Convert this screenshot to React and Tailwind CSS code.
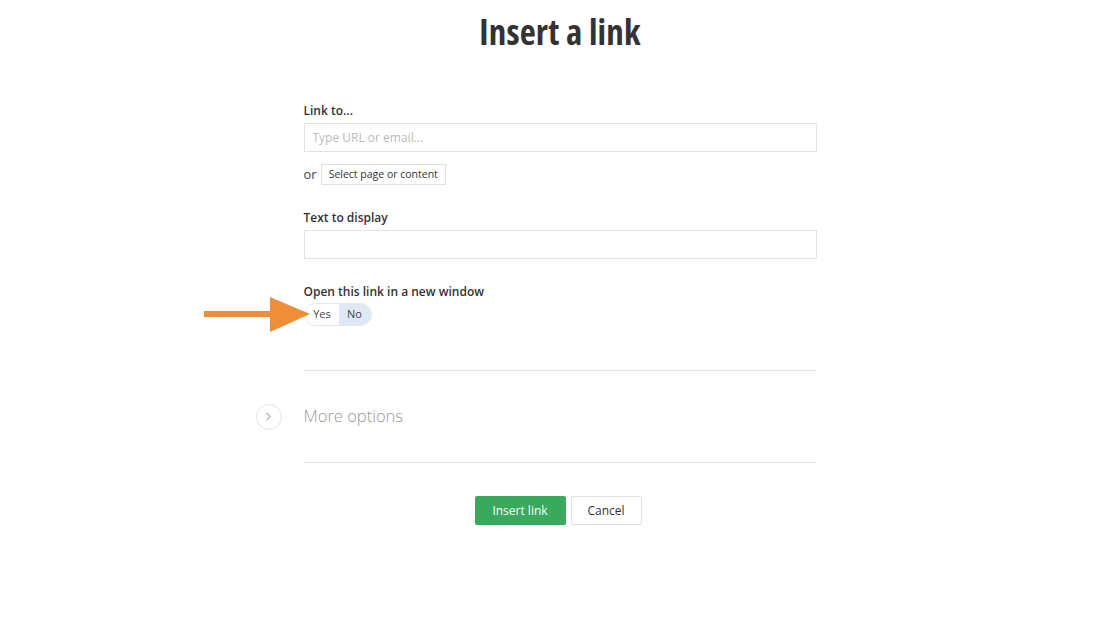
import { ChevronRight } from "lucide-react";

const label = "block text-[12px] font-semibold text-[#333] leading-none";
const input =
  "block h-[29px] w-full border border-[#e3e3e3] bg-white px-2 text-[12px] text-[#333] outline-none placeholder:text-[#bbb]";

export default function App() {
  return (
    <div className="min-h-[626px] bg-white font-['Open_Sans',sans-serif] text-[#333]">
      <h1 className="pt-[8px] text-center font-['Open_Sans','DejaVu_Sans_Condensed',sans-serif] text-[35px] font-bold leading-[48px] text-[#333] [font-stretch:75%] tracking-[0.2px]">
        Insert a link
      </h1>

      <div className="mx-auto mt-[49px] w-[513px]">
        <label className={label}>Link to...</label>
        <input className={`${input} mt-[6px]`} placeholder="Type URL or email..." />
        <div className="mt-[12px] flex items-center gap-[4px]">
          <span className="text-[13px] text-[#444]">or</span>
          <button className="h-[21px] border border-[#e0e0e0] bg-white px-[7px] text-[10.5px] text-[#333]">
            Select page or content
          </button>
        </div>

        <label className={`${label} mt-[27px]`}>Text to display</label>
        <input className={`${input} mt-[6px]`} />

        <label className={`${label} mt-[27px]`}>Open this link in a new window</label>
        <div className="relative mt-[5px] flex">
          <div className="pointer-events-none absolute left-[-100px] top-[-6px]">
            <svg width="108" height="36" viewBox="0 0 108 36">
              <rect x="0" y="14" width="70" height="6" fill="#ef8e38" />
              <polygon points="66,0 106,17 66,35" fill="#ef8e38" />
            </svg>
          </div>
          <div className="flex h-[23px] overflow-hidden rounded-full border border-[#e6e6e6] text-[11px]">
            <span className="flex w-[34px] items-center justify-center bg-white pl-[1px] text-[#444]">Yes</span>
            <span className="flex w-[32px] items-center justify-center bg-[#dde9f4] text-[#444]">No</span>
          </div>
        </div>

        <div className="mt-[44px] border-t border-[#e5e5e5]" />
        <div className="flex h-[91px] items-center">
          <div className="-ml-[48px] mr-[22px] flex h-[26px] w-[26px] items-center justify-center rounded-full border border-[#e3e3e3] text-[#666]">
            <ChevronRight size={13} strokeWidth={1.6} />
          </div>
          <span className="text-[16.5px] font-light text-[#999]">More options</span>
        </div>
        <div className="border-t border-[#e5e5e5]" />

        <div className="mt-[33px] flex justify-center gap-[5px] pr-[4px]">
          <button className="h-[29px] w-[91px] rounded-[2px] bg-[#3aa95d] text-[12px] text-white">
            Insert link
          </button>
          <button className="h-[29px] w-[71px] rounded-[2px] border border-[#e0e0e0] bg-white text-[12px] text-[#333]">
            Cancel
          </button>
        </div>
      </div>
    </div>
  );
}
